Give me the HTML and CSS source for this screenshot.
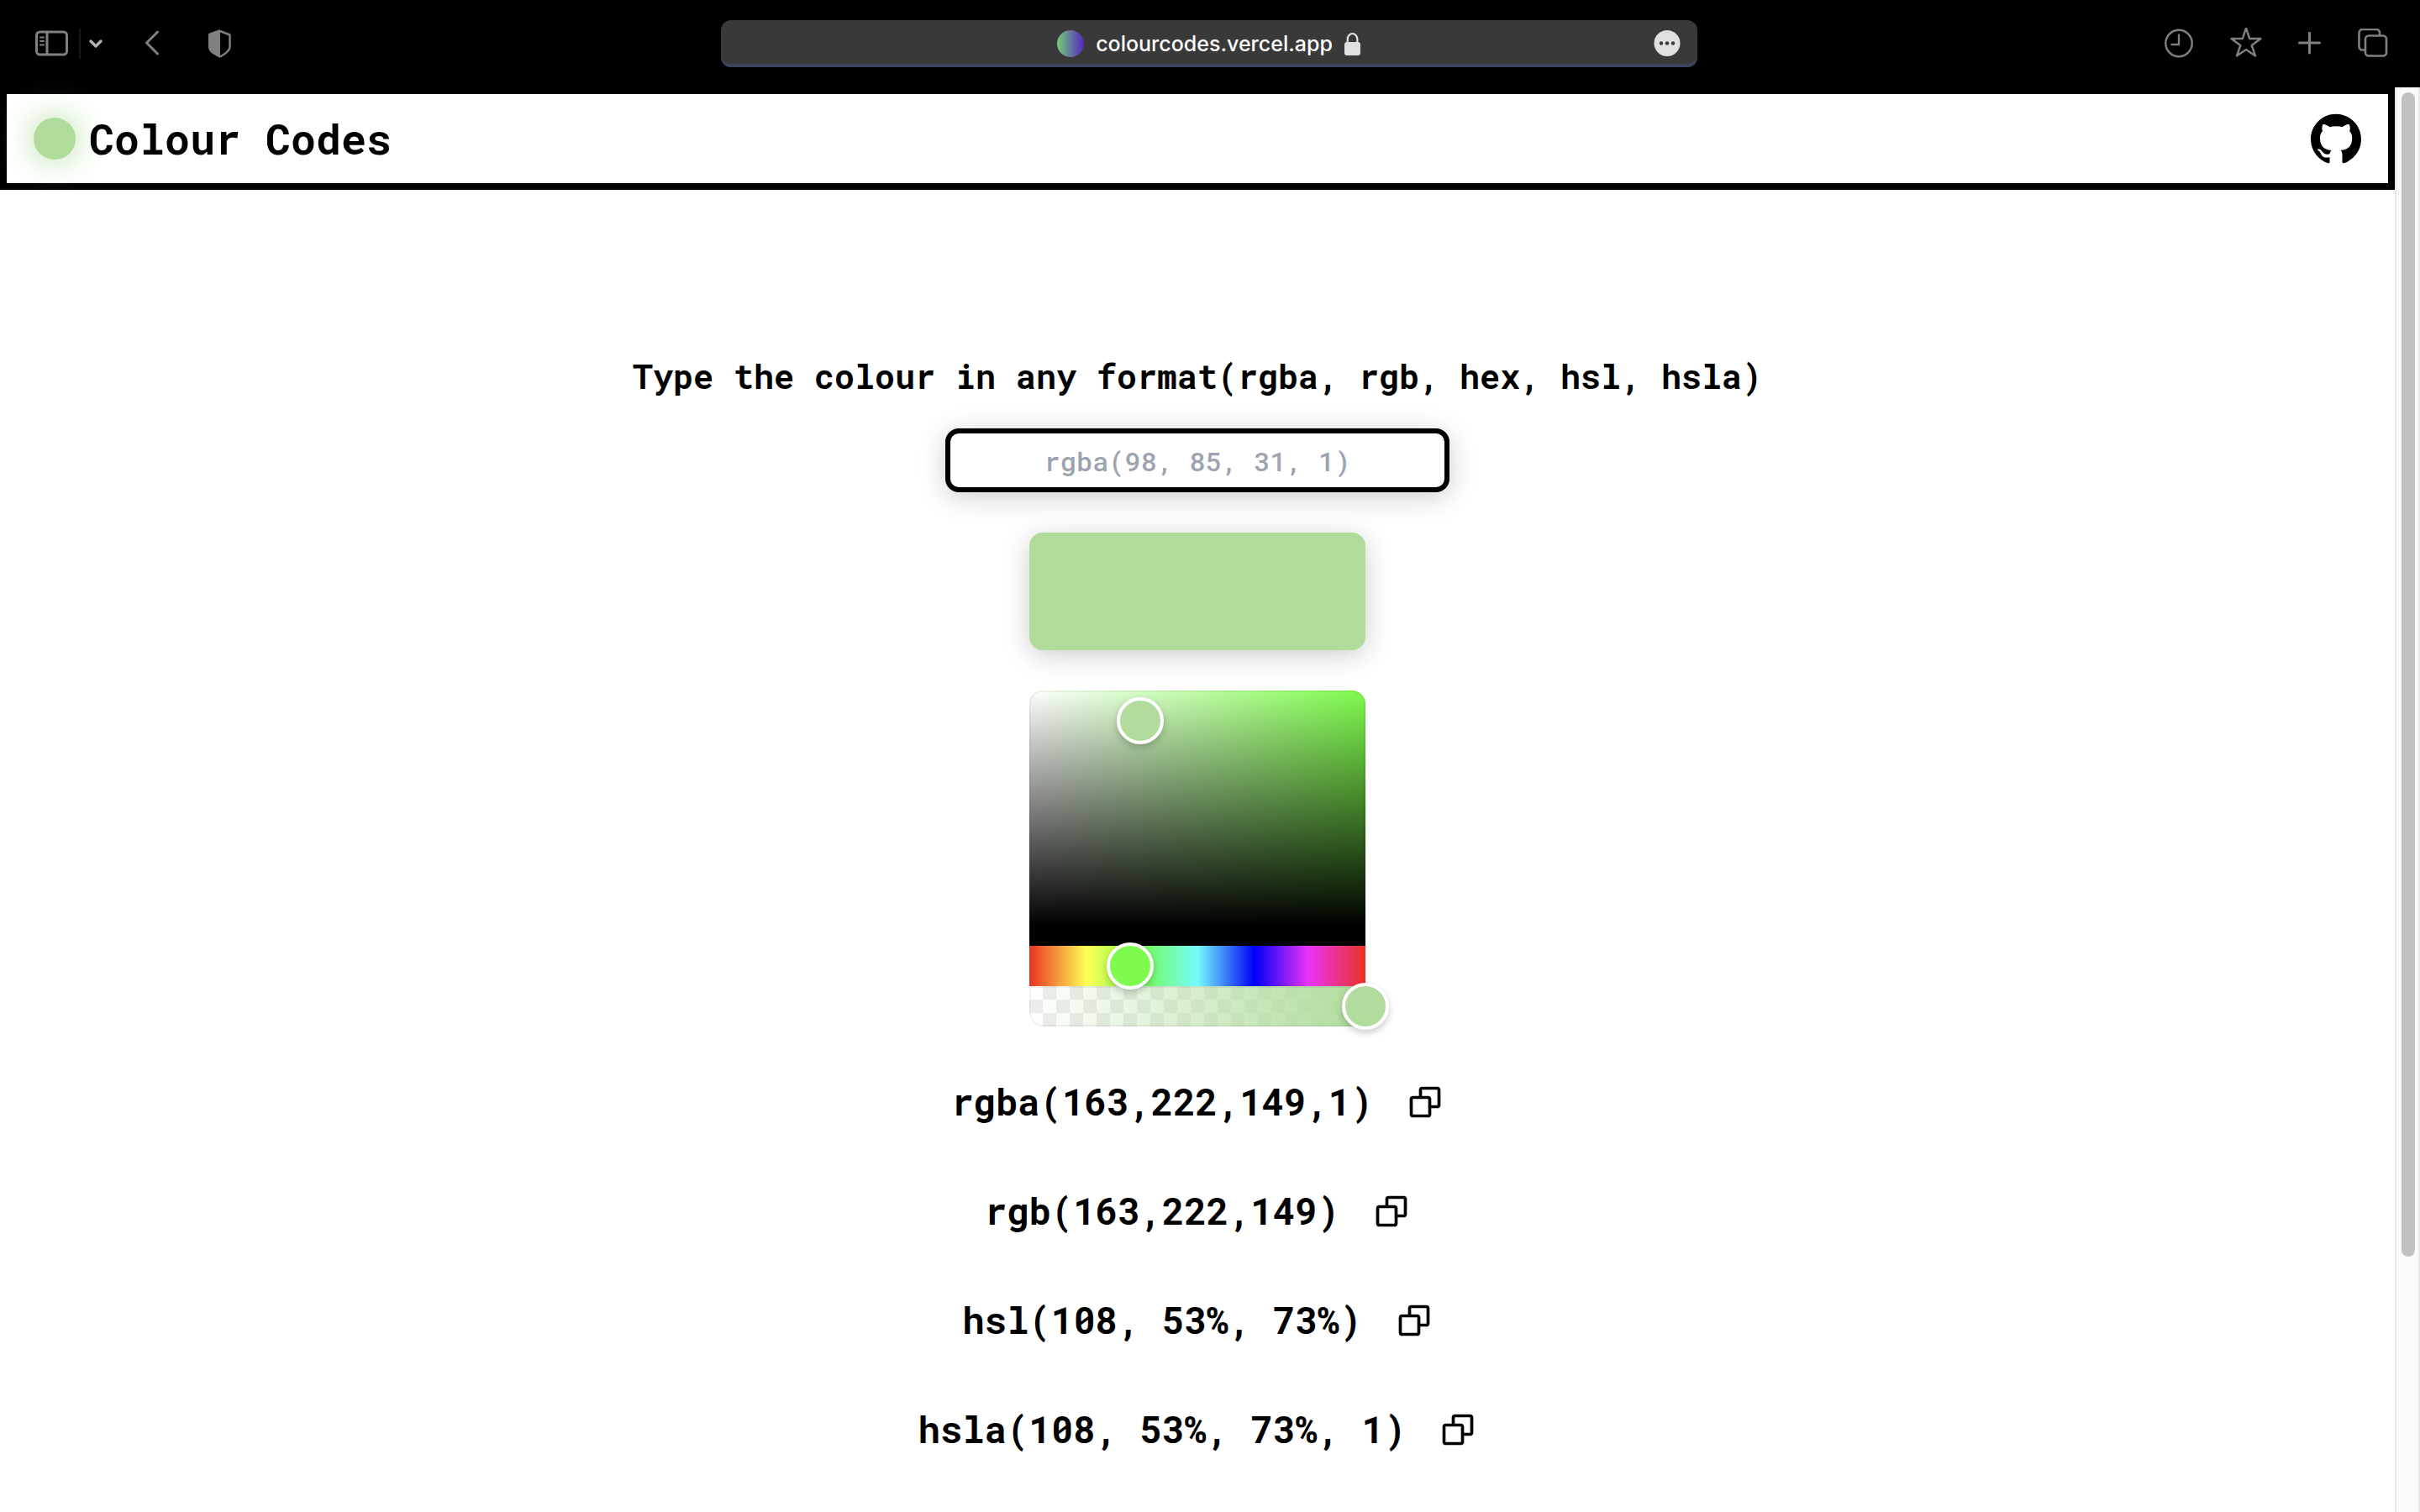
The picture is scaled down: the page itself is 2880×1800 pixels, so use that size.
FILE: index.html
```html
<!DOCTYPE html>
<html lang="en">
<head>
<meta charset="utf-8">
<title>Colour Codes</title>
<link rel="stylesheet" href="styles.css">
</head>
<body>
<div class="toolbar">
  <div class="tools tools-left">
    <button class="tool" aria-label="Sidebar"><svg width="40" height="32" viewBox="0 0 40 32" fill="none" stroke="currentColor" stroke-width="3" stroke-linecap="round"><rect x="1.500" y="2" width="36" height="27" rx="4"/><path d="M14 2v27"/><path d="M6 8.500h4M6 13h4M6 17.500h4" stroke-width="2"/></svg></button>
    <span class="divider"></span>
    <button class="tool tool-menu" aria-label="Sidebar options"><svg width="16" height="12" viewBox="0 0 16 12" fill="none" stroke="currentColor" stroke-width="3.200" stroke-linecap="round" stroke-linejoin="round"><path d="M2 3l6 6 6-6"/></svg></button>
    <button class="tool tool-back" aria-label="Back"><svg width="18" height="32" viewBox="0 0 18 32" fill="none" stroke="currentColor" stroke-width="3" stroke-linecap="round" stroke-linejoin="round"><path d="M15.500 2L2.500 15l13 13"/></svg></button>
    <button class="tool tool-shield" aria-label="Privacy report"><svg width="28" height="34" viewBox="0 0 28 34"><path d="M14 2l11.500 4.500v14.500c0 5-6 8.500-11.500 11.500" fill="none" stroke="currentColor" stroke-width="2.500" stroke-linejoin="round"/><path d="M14 0v34C7 30.500 0 27 0 21V6.500C0 5 .8 4.600 2 4.200z" fill="currentColor"/></svg></button>
  </div>
  <div class="address">
    <span></span>
    <div class="site">
      <span class="favicon"></span>
      <span class="url">colourcodes.vercel.app</span>
      <svg class="lock" width="20" height="28" viewBox="0 0 20 28"><rect x="0" y="12" width="19" height="16" rx="3" fill="currentColor"/><path d="M3.700 13V8.500a5.800 6.500 0 0 1 11.600 0V13" fill="none" stroke="currentColor" stroke-width="2.200"/></svg>
    </div>
    <button class="more" aria-label="Page menu"><svg width="32" height="32" viewBox="0 0 32 32"><circle cx="16" cy="15.500" r="15.500" fill="#e0e0e0"/><g fill="#393939"><circle cx="9" cy="15.500" r="2.200"/><circle cx="16" cy="15.500" r="2.200"/><circle cx="23" cy="15.500" r="2.200"/></g></svg></button>
  </div>
  <div class="tools tools-right">
    <button class="tool" aria-label="History"><svg width="36" height="36" viewBox="0 0 36 36" fill="none" stroke="currentColor" stroke-width="2.400" stroke-linecap="round" stroke-linejoin="round"><circle cx="18" cy="17.500" r="15.700"/><path d="M18 7.500v11.500H9.500"/></svg></button>
    <button class="tool" aria-label="Bookmark"><svg width="38" height="38" viewBox="0 0 38 38" fill="none" stroke="currentColor" stroke-width="2.400" stroke-linejoin="round"><path d="M19 .500l4.200 12.500h13.300L25.700 21l4.300 12.500L19 26 8 33.500l4.300-12.500L1.500 13h13.300z"/></svg></button>
    <button class="tool" aria-label="New tab"><svg width="28" height="28" viewBox="0 0 28 28" fill="none" stroke="currentColor" stroke-width="3" stroke-linecap="round"><path d="M13.500 1v24M1.500 13h24"/></svg></button>
    <button class="tool" aria-label="Tab overview"><svg width="36" height="36" viewBox="0 0 36 36" fill="none" stroke="currentColor" stroke-width="2.600" stroke-linecap="round"><rect x="9" y="8.500" width="25" height="24" rx="4"/><path d="M26 7.500V5a4 4 0 0 0-4-4H5.500a4 4 0 0 0-4 4v16.500a4 4 0 0 0 4 4H8"/></svg></button>
  </div>
</div>
<div class="viewport">
  <div class="page">
    <header class="header">
      <div class="brand">
        <span class="brand-dot"></span>
        <h1 class="brand-name">Colour Codes</h1>
      </div>
      <a class="github" href="#" aria-label="GitHub"><svg width="60" height="60" viewBox="0 0 16 16" fill="currentColor"><path transform="translate(0 .2)" d="M8 0C3.580 0 0 3.580 0 8c0 3.540 2.290 6.530 5.470 7.590.4.070.55-.17.55-.38 0-.19-.01-.82-.01-1.490-2.010.37-2.530-.49-2.690-.94-.09-.23-.48-.94-.82-1.130-.28-.15-.68-.52-.01-.53.63-.01 1.080.58 1.230.82.72 1.210 1.870.87 2.330.66.070-.52.28-.87.51-1.070-1.780-.2-3.640-.89-3.640-3.950 0-.87.31-1.590.82-2.150-.08-.2-.36-1.020.08-2.120 0 0 .67-.21 2.200.82.64-.18 1.320-.27 2-.27s1.360.09 2 .27c1.530-1.040 2.200-.82 2.200-.82.44 1.100.16 1.920.08 2.120.51.56.82 1.270.82 2.150 0 3.070-1.870 3.750-3.650 3.950.29.25.54.73.54 1.480 0 1.070-.01 1.930-.01 2.200 0 .21.15.46.55.38A8.010 8.010 0 0 0 16 8c0-4.420-3.580-8-8-8z"/></svg></a>
    </header>
    <main class="main">
      <label class="prompt" for="colour">Type the colour in any format(rgba, rgb, hex, hsl, hsla)</label>
      <input class="colour-input" id="colour" type="text" placeholder="rgba(98, 85, 31, 1)">
      <div class="swatch"></div>
      <div class="picker">
        <div class="saturation"><button class="handle" aria-label="Saturation and brightness"></button></div>
        <div class="hue"><input class="slider slider-hue" type="range" min="0" max="360" value="108" aria-label="Hue"></div>
        <div class="alpha"><input class="slider slider-alpha" type="range" min="0" max="100" value="100" aria-label="Alpha"></div>
      </div>
      <ul class="codes">
        <li class="code"><span class="code-value">rgba(163,222,149,1)</span><button class="copy" aria-label="Copy rgba"><svg class="copy-icon" viewBox="0 0 24 24"><use href="#copy"/></svg></button></li>
        <li class="code"><span class="code-value">rgb(163,222,149)</span><button class="copy" aria-label="Copy rgb"><svg class="copy-icon" viewBox="0 0 24 24"><use href="#copy"/></svg></button></li>
        <li class="code"><span class="code-value">hsl(108, 53%, 73%)</span><button class="copy" aria-label="Copy hsl"><svg class="copy-icon" viewBox="0 0 24 24"><use href="#copy"/></svg></button></li>
        <li class="code"><span class="code-value">hsla(108, 53%, 73%, 1)</span><button class="copy" aria-label="Copy hsla"><svg class="copy-icon" viewBox="0 0 24 24"><use href="#copy"/></svg></button></li>
      </ul>
    </main>
  </div>
  <div class="scrollbar"><div class="scroll-thumb"></div></div>
</div>
<svg width="0" height="0" class="defs"><defs><path id="copy" d="M20 2H10c-1.103 0-2 .897-2 2v4H4c-1.103 0-2 .897-2 2v10c0 1.103.897 2 2 2h10c1.103 0 2-.897 2-2v-4h4c1.103 0 2-.897 2-2V4c0-1.103-.897-2-2-2zM4 20V10h10l.002 10H4zm16-6h-4v-4c0-1.103-.897-2-2-2h-4V4h10v10z"/></defs></svg>
</body>
</html>
```
FILE: styles.css
```css
* {
  box-sizing: border-box;
}

body {
  margin: 0;
  min-height: 100vh;
  display: flex;
  flex-direction: column;
  background: #fff;
  color: #000;
  font-family: "Roboto Mono", "DejaVu Sans Mono", monospace;
}

button {
  padding: 0;
  border: 0;
  background: none;
  color: inherit;
  font: inherit;
}

svg {
  display: block;
}

.defs {
  position: absolute;
}

/* Browser toolbar */
.toolbar {
  height: 104px;
  padding: 0 38px 0 36px;
  display: grid;
  grid-template-columns: 1fr 1162px 1fr;
  align-items: center;
  background: #000;
  color: #808080;
}

.tools {
  display: flex;
  align-items: center;
}

.tools-left {
  padding-left: 6px;
}

.tools-right {
  justify-content: flex-end;
  gap: 43px;
}

.divider {
  width: 2px;
  height: 36px;
  margin: 0 10px 0 12px;
  background: #171717;
}

.tool-menu {
  color: #b4b4b4;
}

.tool-back {
  margin-left: 50px;
}

.tool-shield {
  margin-left: 58px;
}

.address {
  height: 56px;
  padding: 0 20px;
  display: grid;
  grid-template-columns: 1fr auto 1fr;
  align-items: center;
  border-radius: 12px;
  background: #393939;
  box-shadow: inset 0 -4px #39435c;
}

.site {
  display: flex;
  align-items: center;
  gap: 14px;
}

.favicon {
  width: 32px;
  height: 32px;
  border-radius: 50%;
  background: linear-gradient(90deg, #72cb76, #5623c2);
}

.url {
  color: #fff;
  font-family: Inter, sans-serif;
  font-size: 25px;
  font-weight: 500;
  line-height: 36px;
}

.lock {
  color: #e0e0e0;
}

.more {
  justify-self: end;
}

/* Page area */
.viewport {
  flex: 1;
  display: flex;
}

.page {
  flex: 1;
}

.header {
  height: 122px;
  padding: 0 32px;
  display: flex;
  align-items: center;
  justify-content: space-between;
  border: 8px solid #000;
}

.brand {
  display: flex;
  align-items: center;
  gap: 16px;
}

.brand-dot {
  width: 50px;
  height: 50px;
  border-radius: 50%;
  background: #afdc9b;
  box-shadow: 0 0 40px #afdc9b;
}

.brand-name {
  margin: 0;
  font-size: 50px;
  line-height: 72px;
}

.github {
  color: #000;
}

.main {
  padding-top: 194px;
  display: flex;
  flex-direction: column;
  align-items: center;
}

.prompt {
  margin-bottom: 34px;
  font-size: 40px;
  font-weight: 700;
  line-height: 56px;
}

.colour-input {
  width: 600px;
  height: 76px;
  margin-bottom: 48px;
  padding: 0 16px;
  border: 6px solid #000;
  border-radius: 16px;
  background: #fff;
  box-shadow: 0 6px 32px rgba(0, 0, 0, 0.2);
  font-family: inherit;
  font-size: 32px;
  font-weight: 500;
  text-align: center;
}

.colour-input::placeholder {
  color: #9ca3af;
}

.swatch {
  width: 400px;
  height: 140px;
  margin-bottom: 48px;
  border-radius: 16px;
  background: #afdc9b;
  box-shadow: 0 6px 32px rgba(0, 0, 0, 0.2);
}

/* Colour picker */
.picker {
  width: 400px;
}

.saturation {
  position: relative;
  height: 304px;
  border-bottom: 24px solid #000;
  border-radius: 16px 16px 0 0;
  background:
    linear-gradient(to top, #000, transparent),
    linear-gradient(to right, #fff, transparent),
    #7efb4c;
  box-shadow: inset 0 0 0 2px rgba(0, 0, 0, 0.05);
}

.handle {
  position: absolute;
  left: 33%;
  top: 13%;
  width: 56px;
  height: 56px;
  transform: translate(-50%, -50%);
  border: 4px solid #fff;
  border-radius: 50%;
  background: #b2dc9d;
  box-shadow: 0 4px 8px rgba(0, 0, 0, 0.2);
}

.hue,
.alpha {
  height: 48px;
  display: flex;
  align-items: center;
}

.hue {
  background: linear-gradient(to right, #ea3323 0%, #feff54 17%, #75fb4c 33%, #74fbfd 50%, #0000f5 67%, #ea33f7 83%, #ea3323 100%);
}

.alpha {
  border-radius: 0 0 16px 16px;
  background:
    linear-gradient(to right, rgba(175, 220, 155, 0), #afdc9b),
    conic-gradient(rgba(0, 0, 0, 0.07) 0 25%, transparent 25% 50%, rgba(0, 0, 0, 0.07) 50% 75%, transparent 75%) 0 0 / 32px 32px;
  box-shadow: inset 0 0 0 2px rgba(0, 0, 0, 0.05);
}

/* The slider reaches half a thumb past each end of its track */
.slider {
  flex: 1;
  height: 56px;
  margin: 0 -28px;
  appearance: none;
  background: none;
}

.slider::-webkit-slider-thumb {
  appearance: none;
  box-sizing: border-box;
  width: 56px;
  height: 56px;
  border: 4px solid #fff;
  border-radius: 50%;
  box-shadow: 0 4px 8px rgba(0, 0, 0, 0.2);
}

.slider-hue {
  position: relative;
}

.slider-hue::-webkit-slider-thumb {
  background: #7efb4c;
}

.slider-alpha::-webkit-slider-thumb {
  background: #b2dc9d;
}

/* Code list */
.codes {
  margin: 56px 0 0;
  padding: 0 0 48px;
  display: flex;
  flex-direction: column;
  align-items: center;
  gap: 62px;
  list-style: none;
  font-size: 44px;
  font-weight: 700;
  line-height: 64px;
}

.code {
  height: 68px;
  display: flex;
  align-items: center;
  gap: 40px;
}

.code-value {
  padding-bottom: 2px;
}

.copy-icon {
  width: 44px;
  height: 44px;
}

/* Scrollbar */
.scrollbar {
  width: 30px;
  padding: 6px 4px 6px 6px;
  border: solid #e8e8e8;
  border-width: 0 2px;
  background: #fafafa;
}

.scroll-thumb {
  width: 16px;
  height: 82.3%;
  border-radius: 8px;
  background: #c1c1c1;
}
```
